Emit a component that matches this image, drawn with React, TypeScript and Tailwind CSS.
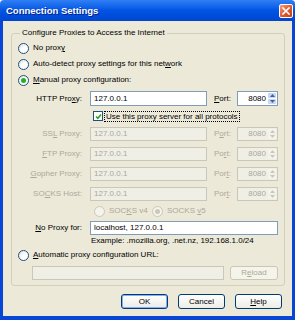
import type { ReactNode } from 'react';

// XP-style "Connection Settings" dialog

function Radio({ checked = false, disabled = false }: { checked?: boolean; disabled?: boolean }) {
  return (
    <span
      className={`flex items-center justify-center w-[11px] h-[11px] rounded-full border shrink-0 ${
        disabled ? 'border-[#cac8bb] bg-[#f5f4ea]' : 'border-[#1c5180] bg-gradient-to-br from-[#dcdcd7] via-white to-white'
      }`}
    >
      {checked && (
        <span className={`w-[5px] h-[5px] rounded-full ${disabled ? 'bg-[#cac8bb]' : 'bg-[#21b121]'}`} />
      )}
    </span>
  );
}

function Ul({ children }: { children: ReactNode }) {
  return <span className="underline underline-offset-1">{children}</span>;
}

function Spinner({ disabled = false }: { disabled?: boolean }) {
  const c = disabled ? '#cac8bb' : '#4d6185';
  return (
    <div className="flex flex-col w-[9px] h-full gap-px py-px pr-px">
      {[0, 1].map((i) => (
        <div
          key={i}
          className={`flex-1 flex items-center justify-center rounded-[1px] ${
            disabled ? 'bg-[#f5f4ea]' : 'bg-[#c6d5fc]'
          }`}
        >
          <svg width="5" height="3" viewBox="0 0 5 3">
            <path d={i === 0 ? 'M0 3 L2.5 0 L5 3Z' : 'M0 0 L2.5 3 L5 0Z'} fill={c} />
          </svg>
        </div>
      ))}
    </div>
  );
}

function ProxyRow({
  label,
  port,
  portLabel,
  disabled = true,
  className = '',
}: {
  label: ReactNode;
  port: string;
  portLabel: ReactNode;
  disabled?: boolean;
  className?: string;
}) {
  const inputCls = disabled
    ? 'border-[#c9c7ba] bg-[#f0efe6] text-[#aca899]'
    : 'border-[#7f9db9] bg-white text-black';
  const txt = disabled ? 'text-[#aca899]' : 'text-black';
  return (
    <div className={`flex items-center h-[14px] ${className}`}>
      <div className={`w-[64px] text-right ${txt}`}>{label}</div>
      <div className={`ml-[8px] w-[117px] h-full border flex items-center px-[3px] ${inputCls}`}>127.0.0.1</div>
      <div className={`ml-[7px] w-[23px] ${txt}`}>{portLabel}</div>
      <div className={`w-[41px] h-full border flex items-center ${inputCls}`}>
        <span className="flex-1 text-right pr-[2px]">{port}</span>
        <Spinner disabled={disabled} />
      </div>
    </div>
  );
}

function Button({ children, focused = false, disabled = false, className = '' }: { children: ReactNode; focused?: boolean; disabled?: boolean; className?: string }) {
  return (
    <div
      className={`flex items-center justify-center rounded-[3px] border ${
        disabled
          ? 'border-[#c9c7ba] bg-[#f5f4ea] text-[#aca899]'
          : 'border-[#003c74] bg-gradient-to-b from-white to-[#ecebe6] text-black'
      } ${focused ? 'shadow-[inset_0_0_0_1px_#88adf4]' : ''} ${className}`}
    >
      {children}
    </div>
  );
}

export default function App() {
  return (
    <div className="w-[295px] h-[320px] flex flex-col font-['Liberation_Sans',Arial,sans-serif] text-[8px] leading-[10px] text-black select-none">
      {/* Title bar */}
      <div className="h-[21px] shrink-0 flex items-center justify-between pl-[6px] pr-[2px] rounded-t-[4px] bg-gradient-to-b from-[#2f7ff5] via-[#0054e3] to-[#0046d0]">
        <span className="text-white font-bold text-[9.5px] leading-[12px] [text-shadow:1px_1px_0_#0a1e8a]">Connection Settings</span>
        <div className="w-[14px] h-[14px] rounded-[2px] border border-white bg-gradient-to-br from-[#f29c7e] via-[#e2592f] to-[#c43f18] flex items-center justify-center">
          <svg width="8" height="8" viewBox="0 0 8 8">
            <path d="M1 1 L7 7 M7 1 L1 7" stroke="white" strokeWidth="1.6" strokeLinecap="square" />
          </svg>
        </div>
      </div>

      {/* Body */}
      <div className="flex-1 flex flex-col bg-[#ece9d8] border-l-[3px] border-r-[3px] border-b-[4px] border-[#0847d6] px-[8px]">
        <fieldset className="mt-[7px] border border-[#d0d0bf] rounded-[3px] pl-[6px] pr-[6px] pb-[5px]">
          <legend className="ml-[2px] px-[2px] h-[10px] text-black">Configure Proxies to Access the Internet</legend>

          <div className="flex flex-col pt-[2px]">
            <div className="flex items-center h-[16px] gap-[4px]">
              <Radio />
              <span>No prox<Ul>y</Ul></span>
            </div>
            <div className="flex items-center h-[16px] gap-[4px]">
              <Radio />
              <span>Auto-detect proxy settings for this net<Ul>w</Ul>ork</span>
            </div>
            <div className="flex items-center h-[16px] gap-[4px]">
              <Radio checked />
              <span><Ul>M</Ul>anual proxy configuration:</span>
            </div>

            <ProxyRow
              className="mt-[3px] !h-[15px]"
              disabled={false}
              label={<>HTTP Pro<Ul>x</Ul>y:</>}
              portLabel={<><Ul>P</Ul>ort:</>}
              port="8080"
            />

            <div className="flex items-center h-[14px] mt-[3px] pl-[75px]">
              <span className="w-[10px] h-[10px] border border-[#1c5180] bg-white flex items-center justify-center">
                <svg width="7" height="7" viewBox="0 0 7 7">
                  <path d="M1 3.5 L2.8 5.3 L6 1.5" stroke="#21a121" strokeWidth="1.5" fill="none" />
                </svg>
              </span>
              <span className="ml-[1px] px-[1px] border border-dotted border-black leading-[9px]">Use this proxy server for all protocols</span>
            </div>

            <ProxyRow className="mt-[4px]" label={<>SS<Ul>L</Ul> Proxy:</>} portLabel={<>P<Ul>o</Ul>rt:</>} port="8080" />
            <ProxyRow className="mt-[6px]" label={<><Ul>F</Ul>TP Proxy:</>} portLabel={<>Po<Ul>r</Ul>t:</>} port="8080" />
            <ProxyRow className="mt-[6px]" label={<><Ul>G</Ul>opher Proxy:</>} portLabel={<>Por<Ul>t</Ul>:</>} port="8080" />
            <ProxyRow className="mt-[6px]" label={<>SO<Ul>C</Ul>KS Host:</>} portLabel={<>Por<Ul>t</Ul>:</>} port="8080" />

            <div className="flex items-center h-[14px] mt-[3px] pl-[76px] text-[#aca899]">
              <Radio disabled />
              <span className="ml-[4px] w-[43px]">SOC<Ul>K</Ul>S v4</span>
              <Radio checked disabled />
              <span className="ml-[4px]">SOCKS <Ul>v</Ul>5</span>
            </div>

            <div className="flex items-center h-[14px] mt-[3px]">
              <div className="w-[64px] text-right"><Ul>N</Ul>o Proxy for:</div>
              <div className="ml-[8px] flex-1 h-full border border-[#7f9db9] bg-white flex items-center px-[3px]">localhost, 127.0.0.1</div>
            </div>

            <div className="h-[10px] mt-[1px] pl-[73px]">Example: .mozilla.org, .net.nz, 192.168.1.0/24</div>

            <div className="flex items-center h-[14px] mt-[2px] gap-[4px]">
              <Radio />
              <span><Ul>A</Ul>utomatic proxy configuration URL:</span>
            </div>

            <div className="flex items-center h-[14px] mt-[4px] pl-[14px]">
              <div className="w-[192px] h-full border border-[#c9c7ba] bg-[#f0efe6]" />
              <Button disabled className="ml-[6px] flex-1 h-full">R<Ul>e</Ul>load</Button>
            </div>
          </div>
        </fieldset>

        <div className="flex justify-end gap-[10px] mt-[8px] pr-[2px]">
          <Button focused className="w-[47px] h-[15px]">OK</Button>
          <Button className="w-[47px] h-[15px]">Cancel</Button>
          <Button className="w-[47px] h-[15px]"><Ul>H</Ul>elp</Button>
        </div>
      </div>
    </div>
  );
}
